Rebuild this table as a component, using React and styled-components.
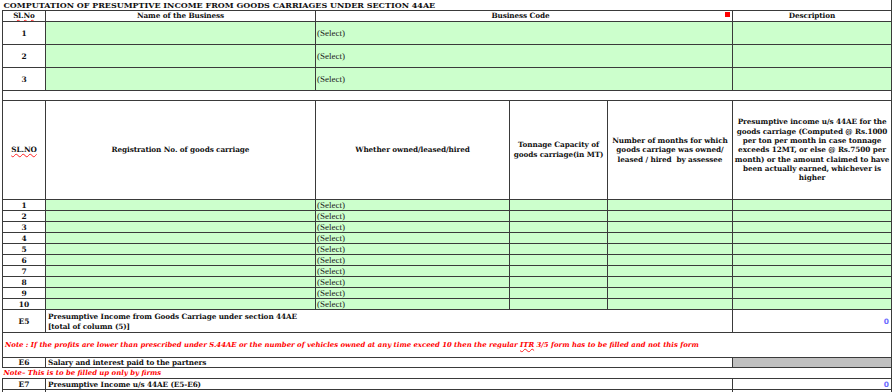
import styled, { createGlobalStyle } from "styled-components";

const GlobalStyle = createGlobalStyle`
  html, body {
    margin: 0;
    padding: 0;
    background: #ffffff;
  }
  body {
    font-family: "DejaVu Serif", "Liberation Serif", serif;
    color: #111111;
  }
`;

const businessRows = [1, 2, 3];
const carriageRows = [1, 2, 3, 4, 5, 6, 7, 8, 9, 10];

const App = () => {
  return (
    <>
      <GlobalStyle />
      <Page>
        <Sheet>
          <colgroup>
            <col style={{ width: 43 }} />
            <col style={{ width: 270 }} />
            <col style={{ width: 194 }} />
            <col style={{ width: 98 }} />
            <col style={{ width: 125 }} />
            <col style={{ width: 159 }} />
          </colgroup>
          <tbody>
            <Row $h={10}>
              <TitleCell colSpan={6}>
                COMPUTATION OF PRESUMPTIVE INCOME FROM GOODS CARRIAGES UNDER SECTION 44AE
              </TitleCell>
            </Row>
            <Row $h={11}>
              <HeadCell>
                <Squiggle>Sl.No</Squiggle>
              </HeadCell>
              <HeadCell>Name of the Business</HeadCell>
              <HeadCell colSpan={3} $marker>
                Business Code
                <Marker />
              </HeadCell>
              <HeadCell>Description</HeadCell>
            </Row>
            {businessRows.map((n) => (
              <Row $h={23} key={"b" + n}>
                <NumCell>{n}</NumCell>
                <Cell $fill="green" />
                <Cell $fill="green" colSpan={3}>
                  <Select>(Select)</Select>
                </Cell>
                <Cell $fill="green" />
              </Row>
            ))}
            <Row $h={10}>
              <Cell colSpan={6} />
            </Row>
            <Row $h={99}>
              <HeadCell>
                <Squiggle>SL.NO</Squiggle>
              </HeadCell>
              <HeadCell>Registration No. of goods carriage</HeadCell>
              <HeadCell>Whether owned/leased/hired</HeadCell>
              <HeadCell>
                Tonnage Capacity of
                <br />
                goods carriage(in MT)
              </HeadCell>
              <HeadCell>
                Number of months for which
                <br />
                goods carriage was owned/
                <br />
                leased / hired &nbsp;by assessee
              </HeadCell>
              <HeadCell $tight>
                Presumptive income u/s 44AE for the
                <br />
                goods carriage (Computed @ Rs.1000
                <br />
                per ton per month in case tonnage
                <br />
                exceeds 12MT, or else @ Rs.7500 per
                <br />
                month) or the amount claimed to have
                <br />
                been actually earned, whichever is
                <br />
                higher
              </HeadCell>
            </Row>
            {carriageRows.map((n) => (
              <Row $h={11} key={"c" + n}>
                <NumCell>{n}</NumCell>
                <Cell $fill="green" />
                <Cell $fill="green">
                  <Select>(Select)</Select>
                </Cell>
                <Cell $fill="green" />
                <Cell $fill="green" />
                <Cell $fill="green" />
              </Row>
            ))}
            <Row $h={23}>
              <NumCell>E5</NumCell>
              <LabelCell colSpan={4} $top>
                Presumptive Income from Goods Carriage under section 44AE
                <br />
                [total of column (5)]
              </LabelCell>
              <ValueCell>0</ValueCell>
            </Row>
            <Row $h={25}>
              <NoteCell colSpan={6}>
                Note : If the profits are lower than prescribed under S.44AE or the number of
                vehicles owned at any time exceed 10 then the regular <Squiggle>ITR</Squiggle> 3/5
                form has to be filled and not this form
              </NoteCell>
            </Row>
            <Row $h={10}>
              <NumCell>E6</NumCell>
              <LabelCell colSpan={4}>Salary and interest paid to the partners</LabelCell>
              <Cell $fill="grey" />
            </Row>
            <Row $h={11}>
              <NoteCell colSpan={6} $flush>
                Note– This is to be filled up only by firms
              </NoteCell>
            </Row>
            <Row $h={11}>
              <NumCell>E7</NumCell>
              <LabelCell colSpan={4}>Presumptive Income u/s 44AE (E5-E6)</LabelCell>
              <ValueCell>0</ValueCell>
            </Row>
            <Row $h={11}>
              <NumCell />
              <LabelCell colSpan={4} />
              <Cell />
            </Row>
          </tbody>
        </Sheet>
      </Page>
    </>
  );
};

export default App;

// styled components
const fills = {
  green: "#ccffcc",
  grey: "#c0c0c0",
};

const Page = styled.div`
  padding: 0 0 0 2px;
  width: 893px;
  height: 392px;
  overflow: hidden;
  box-sizing: border-box;
`;

const Sheet = styled.table`
  border-collapse: collapse;
  table-layout: fixed;
  width: 889px;
  font-size: 7.5px;
`;

const Row = styled.tr`
  height: ${(p) => p.$h}px;
`;

const Cell = styled.td`
  position: relative;
  border: 1px solid #3a3a3a;
  background: ${(p) => fills[p.$fill] || "#ffffff"};
  padding: 0 1px;
  vertical-align: middle;
  line-height: 9px;
  white-space: nowrap;
  overflow: hidden;
`;

const TitleCell = styled(Cell)`
  border-top: none;
  border-left: none;
  padding: 0 0 0 1px;
  font-weight: 700;
  font-size: 8px;
  text-align: left;
  vertical-align: top;
  line-height: 10px;
`;

const HeadCell = styled(Cell)`
  font-weight: 700;
  text-align: center;
  font-size: 7.3px;
  letter-spacing: -0.1px;
  line-height: ${(p) => (p.$tight ? "9.3px" : "9.6px")};
  padding-right: ${(p) => (p.$marker ? "8px" : "1px")};
`;

const Marker = styled.span`
  position: absolute;
  top: 1px;
  right: 2px;
  width: 5px;
  height: 5px;
  background: #ff0000;
`;

const NumCell = styled(Cell)`
  font-weight: 700;
  text-align: center;
  font-size: 7.5px;
`;

const LabelCell = styled(Cell)`
  font-weight: 700;
  text-align: left;
  font-size: 7.3px;
  letter-spacing: -0.1px;
  padding-left: 2px;
  vertical-align: ${(p) => (p.$top ? "top" : "middle")};
  padding-top: ${(p) => (p.$top ? "2px" : "0")};
  line-height: ${(p) => (p.$top ? "10px" : "9px")};
`;

const ValueCell = styled(Cell)`
  text-align: right;
  font-family: "DejaVu Sans", Verdana, sans-serif;
  font-weight: 700;
  font-size: 7.5px;
  color: #6b6bff;
  padding-right: 2px;
`;

const NoteCell = styled(Cell)`
  color: #ff0000;
  font-weight: 700;
  font-style: italic;
  font-size: 6.9px;
  text-align: left;
  padding-left: ${(p) => (p.$flush ? "1px" : "2px")};
  border-left: ${(p) => (p.$flush ? "none" : "1px solid #3a3a3a")};
`;

const Select = styled.span`
  font-family: "Liberation Serif", serif;
  font-weight: 400;
  font-size: 9px;
  color: #222222;
`;

const Squiggle = styled.span`
  text-decoration: underline wavy #ff2020;
  text-decoration-thickness: 1px;
  text-underline-offset: 1px;
`;
